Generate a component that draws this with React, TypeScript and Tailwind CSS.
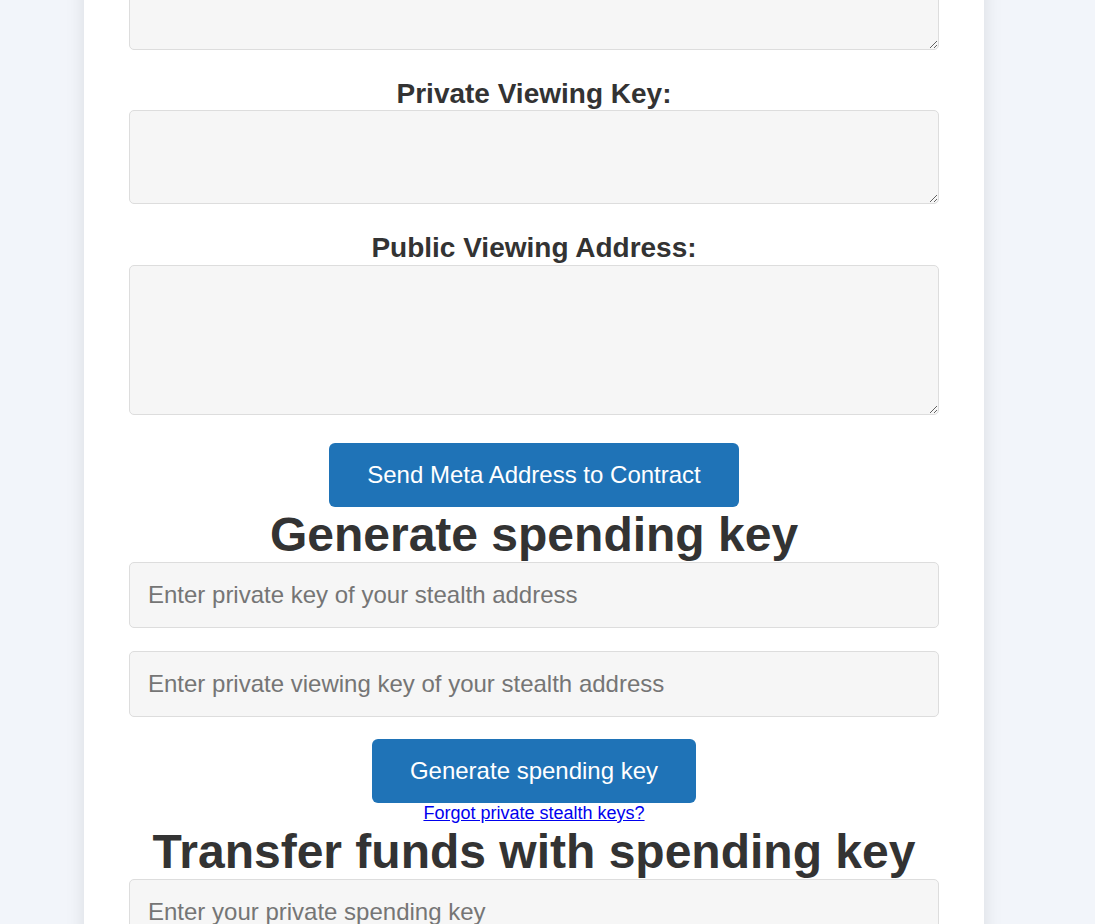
import React from "react";

export default function App() {
  const font = { fontFamily: '"Liberation Sans", Arial, sans-serif' };
  const taCls =
    "w-full shrink-0 bg-[#f6f6f6] border border-[#dddddd] rounded-[5px] block resize-y outline-none";
  const inCls =
    "w-full shrink-0 h-[66px] bg-[#f6f6f6] border border-[#dddddd] rounded-[5px] px-[18px] text-[24px] text-[#333] placeholder:text-[#757575] outline-none";
  const btnCls =
    "shrink-0 bg-[#1f73b7] text-white text-[24px] h-[64px] px-[38px] rounded-[6px] leading-none";
  return (
    <div
      className="h-[924px] overflow-hidden bg-[#f2f5fa] flex justify-center items-start pr-[27px]"
      style={font}
    >
      <div className="w-[900px] bg-white shadow-[0_0_18px_rgba(0,0,0,0.1)] px-[45px] pb-[200px] flex flex-col items-center mt-[-44px] shrink-0">
        <textarea className={`${taCls} h-[94px]`} />
        <label className="shrink-0 mt-[28px] text-[28px] font-bold text-[#333] leading-[32px]">
          Private Viewing Key:
        </label>
        <textarea className={`${taCls} h-[94px]`} />
        <label className="shrink-0 mt-[28px] text-[28px] font-bold text-[#333] leading-[32px]">
          Public Viewing Address:
        </label>
        <textarea className={`${taCls} h-[150px] mt-px`} />
        <button className={`${btnCls} mt-[28px]`}>Send Meta Address to Contract</button>
        <h2 className="shrink-0 text-[48px] font-bold text-[#333] leading-[55px]">
          Generate spending key
        </h2>
        <input className={inCls} placeholder="Enter private key of your stealth address" />
        <input
          className={`${inCls} mt-[23px]`}
          placeholder="Enter private viewing key of your stealth address"
        />
        <button className={`${btnCls} mt-[22px]`}>Generate spending key</button>
        <a
          href="#"
          className="shrink-0 text-[18px] text-[#0000ee] underline leading-[21px]"
        >
          Forgot private stealth keys?
        </a>
        <h2 className="shrink-0 text-[48px] font-bold text-[#333] leading-[55px]">
          Transfer funds with spending key
        </h2>
        <input className={inCls} placeholder="Enter your private spending key" />
      </div>
    </div>
  );
}
